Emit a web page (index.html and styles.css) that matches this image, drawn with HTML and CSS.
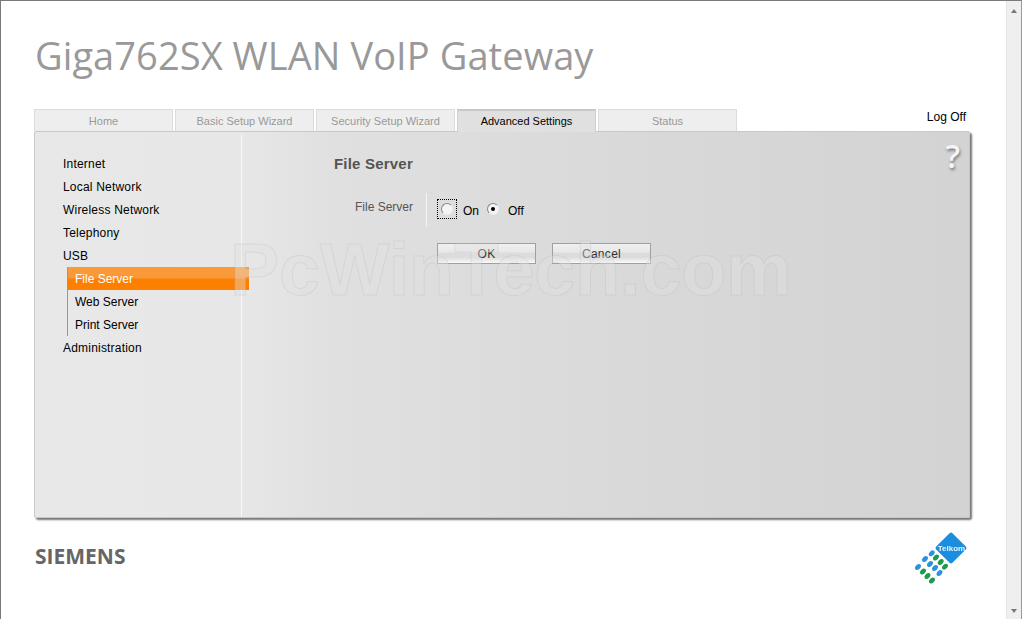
FILE: index.html
```html
<!DOCTYPE html>
<html lang="en">
<head>
    <meta charset="UTF-8">
    <meta name="viewport" content="width=device-width, initial-scale=1.0">
    <title>Giga762SX WLAN VoIP Gateway</title>
    <link rel="stylesheet" href="styles.css">
</head>
<body>
    <div class="page">
        <h1 class="title">Giga762SX WLAN VoIP Gateway</h1>
        <div class="tab-row">
            <a class="tab" href="#">Home</a>
            <a class="tab" href="#">Basic Setup Wizard</a>
            <a class="tab" href="#">Security Setup Wizard</a>
            <a class="tab active" href="#">Advanced Settings</a>
            <a class="tab" href="#">Status</a>
            <a class="logoff" href="#">Log Off</a>
        </div>
        <div class="panel">
            <div class="sidebar">
                <a class="menu-item" href="#">Internet</a>
                <a class="menu-item" href="#">Local Network</a>
                <a class="menu-item" href="#">Wireless Network</a>
                <a class="menu-item" href="#">Telephony</a>
                <a class="menu-item" href="#">USB</a>
                <div class="submenu">
                    <a class="sub-item selected" href="#">File Server</a>
                    <a class="sub-item" href="#">Web Server</a>
                    <a class="sub-item" href="#">Print Server</a>
                </div>
                <a class="menu-item" href="#">Administration</a>
            </div>
            <div class="content">
                <h2 class="content-title">File Server</h2>
                <div class="form-row">
                    <div class="form-label">File Server</div>
                    <div class="form-field">
                        <span class="radio-focus"><span class="radio"></span></span>
                        <span class="radio-text">On</span>
                        <span class="radio checked"></span>
                        <span class="radio-text">Off</span>
                    </div>
                </div>
                <div class="button-row">
                    <button class="btn" type="button">OK</button>
                    <button class="btn" type="button">Cancel</button>
                </div>
            </div>
            <div class="help">?</div>
        </div>
        <div class="footer">
            <div class="siemens">SIEMENS</div>
            <svg class="telkom" viewBox="0 0 54 56" width="54" height="56">
                <rect x="25.5" y="6.5" width="23" height="23" rx="2" transform="rotate(45 37 18)" fill="#1b8ee0"/>
                <text x="37.5" y="20.5" class="telkom-text" text-anchor="middle">Telkom</text>
                <g fill="#2a93de">
                    <ellipse class="dot" cx="17.7" cy="23.3" rx="3.4" ry="2.3"/>
                    <ellipse class="dot" cx="11" cy="29" rx="3.4" ry="2.3"/>
                    <ellipse class="dot" cx="16" cy="34" rx="3.4" ry="2.3"/>
                    <ellipse class="dot" cx="21" cy="38" rx="3.4" ry="2.3"/>
                    <ellipse class="dot" cx="25.5" cy="43" rx="3.4" ry="2.3"/>
                    <ellipse class="dot" cx="4" cy="37" rx="3.4" ry="2.3"/>
                </g>
                <g fill="#1f9a4c">
                    <ellipse class="dot" cx="22" cy="27.5" rx="3.4" ry="2.3"/>
                    <ellipse class="dot" cx="26.7" cy="32" rx="3.4" ry="2.3"/>
                    <ellipse class="dot" cx="31" cy="36.7" rx="3.4" ry="2.3"/>
                    <ellipse class="dot" cx="9" cy="41.5" rx="3.4" ry="2.3"/>
                    <ellipse class="dot" cx="13.5" cy="46" rx="3.4" ry="2.3"/>
                    <ellipse class="dot" cx="18" cy="50.5" rx="3.4" ry="2.3"/>
                </g>
            </svg>
        </div>
        <div class="watermark">PcWinTech.com</div>
    </div>
    <div class="scrollbar">
        <div class="arrow-up"></div>
        <div class="arrow-down"></div>
    </div>
</body>
</html>
```

FILE: styles.css
```css
* { margin: 0; padding: 0; box-sizing: border-box; }
html, body { height: 100%; overflow: hidden; }
body { font-family: "Liberation Sans", Arial, sans-serif; font-size: 12px; background: #fff; color: #000; display: flex; border-top: 1px solid #7a7a7a; border-left: 1px solid #7a7a7a; border-right: 1px solid #9a9a9a; }
a { text-decoration: none; color: inherit; }

.page { position: relative; width: 1005px; height: 618px; padding: 32px 0 0 33px; flex: none; }
.title { font-family: "Open Sans", sans-serif; font-weight: 400; font-size: 38px; line-height: 44px; height: 76px; color: #999; padding-left: 1px; letter-spacing: 0.08px; }

.tab-row { display: flex; gap: 2px; width: 936px; height: 22px; }
.tab { width: 139px; height: 22px; background: #eee; border: 1px solid #dcdcdc; border-bottom: 0; font-size: 11px; color: #999; text-align: center; line-height: 22px; }
.tab.active { height: 23px; background: #e0e0e0; border: 1px solid #d0d0d0; border-top: 2px solid #c8c8c8; border-bottom: 0; line-height: 21px; color: #000; position: relative; z-index: 1; }
.logoff { margin-left: auto; color: #000; line-height: 16px; padding-right: 4px; }

.panel { position: relative; display: flex; width: 936px; height: 387px; border: 1px solid #c8c8c8; border-radius: 2px; background: linear-gradient(to right, #e8e8e8 0%, #e7e7e7 22%, #e0e0e0 32%, #d8d8d8 68%, #d3d3d3 100%); box-shadow: 2px 2px 2px #777; }
.sidebar { width: 207px; margin-top: 3px; border-right: 1px solid #f8f8f8; padding: 18px 0 0 28px; }
.menu-item { display: block; height: 23px; line-height: 23px; letter-spacing: 0.2px; }
.submenu { margin-left: 4px; border-left: 1px solid #999; margin-top: -1px; margin-bottom: 1px; }
.sub-item { display: block; height: 23px; line-height: 25px; padding-left: 7px; }
.sub-item.selected { width: 181px; color: #fff; background: linear-gradient(to bottom, #fb9a38 0%, #fa9838 45%, #fb7f00 55%, #ff8000 100%); }

.content { flex: 1; padding: 23px 0 0 92px; }
.content-title { font-size: 15px; font-weight: bold; line-height: 17px; color: #555; letter-spacing: 0.2px; }
.form-row { display: flex; margin-top: 21px; height: 34px; }
.form-label { width: 92px; padding-top: 7px; line-height: 14px; color: #555; padding-left: 21px; }
.form-field { display: flex; align-items: center; border-left: 1px solid #f4f4f4; padding-left: 10px; }
.radio-focus { display: flex; align-items: center; justify-content: center; width: 20px; height: 20px; border: 1px dotted #000; margin-top: -2px; }
.radio { display: block; position: relative; width: 12px; height: 12px; border-radius: 50%; background: #f4f4f4; border: 1px solid #888; border-right-color: #eee; border-bottom-color: #eee; }
.radio.checked { margin: -3px 0 0 8px; }
.radio.checked::after { content: ""; position: absolute; left: 3px; top: 3px; width: 4px; height: 4px; border-radius: 50%; background: #000; }
.radio-text { margin-left: 6px; padding-top: 2px; line-height: 14px; }
.radio.checked + .radio-text { margin-left: 9px; }

.button-row { display: flex; gap: 16px; margin-top: 16px; margin-left: 103px; }
.btn { width: 99px; height: 21px; font-family: "Liberation Sans", Arial, sans-serif; font-size: 12px; letter-spacing: 0.3px; padding-top: 1px; color: #333; border: 1px solid #a0a0a0; background: linear-gradient(to bottom, #f0f0f0 0%, #e8e8e8 40%, #dcdcdc 50%, #dcdcdc 70%, #fafafa 100%); }

.help { position: absolute; top: 6px; right: 9px; font-size: 32px; line-height: 36px; font-weight: 600; color: #f5f5f5; text-shadow: 1px 2px 3px #777; font-family: "Open Sans", sans-serif; }

.footer { display: flex; justify-content: space-between; align-items: flex-start; width: 936px; padding-top: 12px; }
.siemens { font-family: "Open Sans", sans-serif; font-weight: 700; font-size: 21px; line-height: 27px; margin-top: 13px; color: #666; padding-left: 1px; }
.telkom { display: block; margin-right: 2px; filter: blur(0.35px); }
.telkom-text { font-family: "Liberation Sans", sans-serif; font-weight: bold; font-size: 8px; fill: #e8f4fc; }
.dot { transform-box: fill-box; transform-origin: center; transform: rotate(-45deg); }

.watermark { position: absolute; left: 229px; top: 232px; font-size: 73.5px; line-height: 73px; font-weight: bold; color: rgba(224, 224, 224, 0.4); -webkit-text-stroke: 1px rgba(170, 170, 170, 0.2); pointer-events: none; white-space: nowrap; }

.scrollbar { position: relative; flex: 1; background: #efefef; border-left: 1px solid #e4e4e4; }
.arrow-up, .arrow-down { position: absolute; left: 4px; width: 0; height: 0; border-left: 3.5px solid transparent; border-right: 3.5px solid transparent; }
.arrow-up { top: 8px; border-bottom: 4px solid #777; }
.arrow-down { bottom: 6px; border-top: 4px solid #777; }
```
